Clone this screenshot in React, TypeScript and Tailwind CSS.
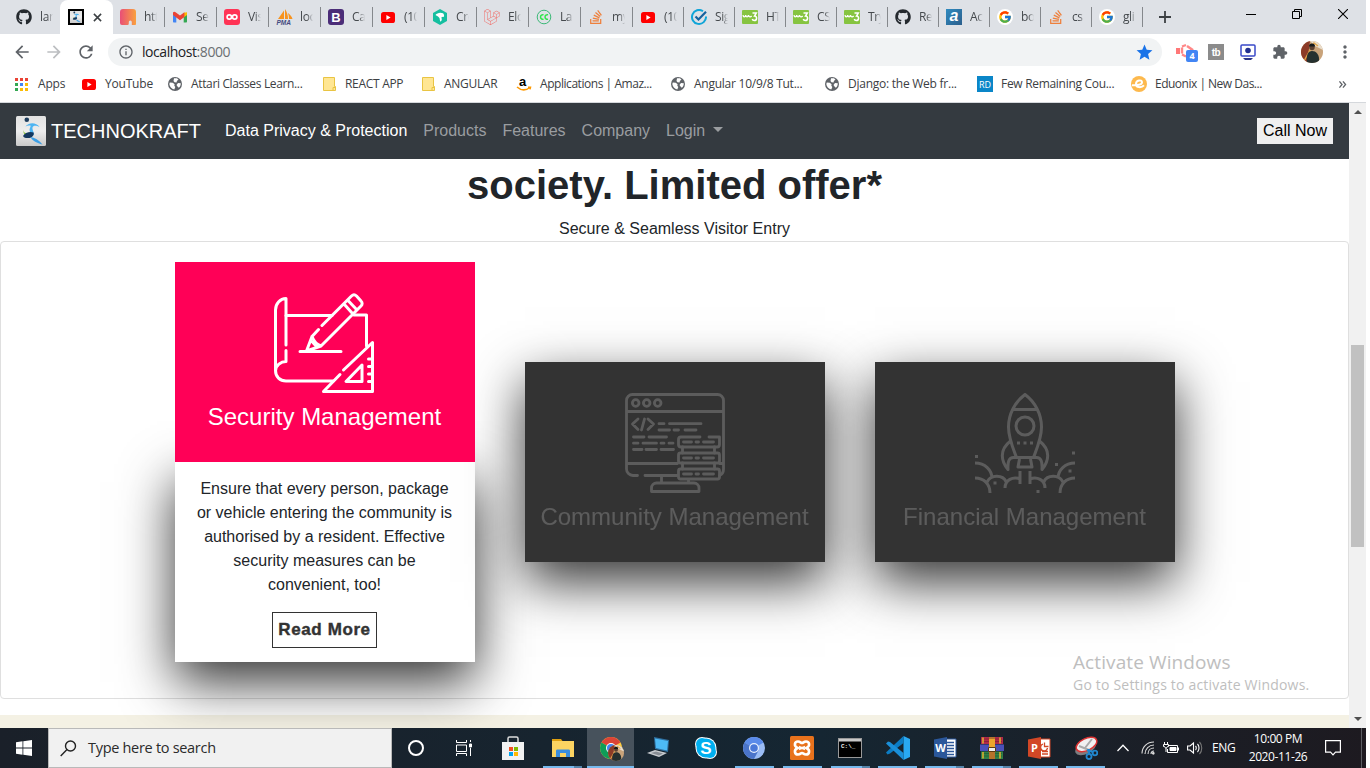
import React from "react";
import type { ReactNode } from "react";
import { FaGithub, FaLaravel, FaStackOverflow } from "react-icons/fa";
import { FcGoogle } from "react-icons/fc";
import {
  MdArrowBack, MdArrowForward, MdRefresh, MdInfoOutline, MdStar, MdExtension, MdMoreVert, MdPublic,
} from "react-icons/md";

/* ---------- favicons ---------- */

const YouTube = () => (
  <svg viewBox="0 0 16 16" className="h-4 w-4">
    <rect x="1" y="3" width="14" height="11" rx="2.6" fill="#f00" />
    <path d="M6.4 6v5l4.2-2.5z" fill="#fff" />
  </svg>
);

const Runner = () => (
  <svg viewBox="0 0 30 30" className="h-full w-full">
    <defs>
      <linearGradient id="plate" x1="0" y1="0" x2="0" y2="1">
        <stop offset="0" stopColor="#e2e2e2" />
        <stop offset="0.5" stopColor="#ededed" />
        <stop offset="1" stopColor="#c9c9c9" />
      </linearGradient>
    </defs>
    <rect width="30" height="30" rx="1.5" fill="url(#plate)" />
    <circle cx="10.800" cy="3.800" r="2.300" fill="#1d3c5c" />
    <path d="M9.500 10.500C12 6.500 20 5.500 23.500 11c-3.500-2-6.500-1.500-7 .5-.5 2.500 2 4.500 1 8-1.500-2-4-3-4-5.500 0-2 1.500-3 1-4.500-1.500-.3-3.500 0-5 1z" fill="#4db4f2" />
    <path d="M7.500 13c-.5 3 1.500 4.500 4.500 4.500l2 2c-4 1.500-7.500-1.500-6.500-6.500z" fill="#8bc63e" />
    <path d="M7 20c2-3.500 7-5 10.500-3.500 1 2-1 5-4 5.500-3 .3-5.500 0-6.500-2z" fill="#14385f" />
    <path d="M14.500 21c4 .5 8.500 3 12 7.500-5.500-1.500-10-3.500-12-7.500z" fill="#3b9fe6" />
  </svg>
);

const RunnerTab = () => (
  <span className="block h-4 w-4 border-2 border-black bg-white"><Runner /></span>
);

const Gmail = () => (
  <svg viewBox="0 0 16 16" className="h-4 w-4">
    <path d="M1 4v8.5c0 .6.4 1 1 1h2.300V6.500z" fill="#4285f4" />
    <path d="M15 4v8.500c0 .6-.4 1-1 1h-2.300V6.500z" fill="#34a853" />
    <path d="M11.700 3.800 15 3.200V6l-3.300 2.500z" fill="#fbbc04" />
    <path d="M1 3.500C1.500 2.500 2.800 2.500 3.600 3.200L8 6.500l4.400-3.300v4.700L8 11.200 3.600 7.900 1 6z" fill="#ea4335" />
  </svg>
);

const Arch = () => (
  <svg viewBox="0 0 16 16" className="h-4 w-4">
    <defs>
      <linearGradient id="arch" x1="0" y1="0" x2="1" y2="0">
        <stop offset="0" stopColor="#e94e77" />
        <stop offset="1" stopColor="#f9a13f" />
      </linearGradient>
    </defs>
    <path d="M3 0h10a3 3 0 0 1 3 3v12c0 .6-.4 1-1 1h-3.200v-3a1.500 1.500 0 0 0-3 0v1.500c0 1-.6 1.500-1.500 1.500H2a2 2 0 0 1-2-2V3a3 3 0 0 1 3-3z" fill="url(#arch)" />
  </svg>
);

const LoopTile = () => (
  <svg viewBox="0 0 16 16" className="h-4 w-4">
    <rect width="16" height="16" rx="3" fill="#ff3355" />
    <circle cx="5.300" cy="8" r="2.200" fill="none" stroke="#fff" strokeWidth="1.700" />
    <circle cx="10.700" cy="8" r="2.200" fill="none" stroke="#fff" strokeWidth="1.700" />
  </svg>
);

const Pma = () => (
  <svg viewBox="0 0 18 16" className="h-4 w-[18px]">
    <path d="M2 10 8 1.500V10zM9 10V0c2 3 3 6 3 10zM13 10c0-2-.3-4-1-6 2 1.500 4 3.500 4.500 6z" fill="#f7931e" />
    <text x="0.500" y="16" fontSize="6.500" fontWeight="bold" fontStyle="italic" fontFamily="Liberation Sans, sans-serif" fill="#444a80">PMA</text>
  </svg>
);

const Tile = ({ className, children }: { className: string; children: ReactNode }) => (
  <span className={`flex h-4 w-4 items-center justify-center leading-none ${className}`}>{children}</span>
);

const BootstrapB = () => (
  <Tile className="rounded-[3px] bg-[#4b2d78] font-['Liberation_Sans',sans-serif] text-[13px] font-bold text-white">B</Tile>
);

const Hexagon = () => (
  <svg viewBox="0 0 16 16" className="h-4 w-4">
    <path d="M8 0l7 4v8l-7 4-7-4V4z" fill="#15bfa0" />
    <path d="M3.500 6C5 4 8 3 11 4.200c1 1 1.300 2.200 1 3.600L9.500 8l.3 3.300-1.600 1.400L7.500 9 6 7.500z" fill="#fff" />
  </svg>
);

const CodeCourse = () => (
  <svg viewBox="0 0 16 16" className="h-4 w-4">
    <circle cx="8" cy="8" r="6.800" fill="none" stroke="#3cb878" strokeWidth="1" />
    <path d="M7.500 5.800a2.300 2.300 0 1 0 0 4.400M12 5.800a2.300 2.300 0 1 0 0 4.400" fill="none" stroke="#2ee54a" strokeWidth="1.500" />
  </svg>
);

const CheckRing = () => (
  <svg viewBox="0 0 16 16" className="h-4 w-4" fill="none">
    <path d="M12 2.200A7 7 0 1 0 15 7.500" stroke="#10a5d8" strokeWidth="2" />
    <path d="M4.500 7.500l3 3L15 2.800" stroke="#17629e" strokeWidth="2.200" />
  </svg>
);

const W3 = () => (
  <svg viewBox="0 0 16 16" className="h-4 w-4">
    <rect y="1" width="16" height="14" rx="1" fill="#86c440" />
    <path d="M1 6.200c.3 2.300 2.200 2.300 2.700 0 .4 2.300 2.300 2.300 2.700 0 .5 2.300 2.300 2 3.300.8" fill="none" stroke="#fff" strokeWidth="1.300" />
    <path d="M10.500 4h3.800L12.500 7c3 .2 2.600 4.500-.2 4.500-1 0-1.800-.5-2-1.500" fill="none" stroke="#fff" strokeWidth="1.500" />
  </svg>
);

const ATile = () => (
  <Tile className="bg-linear-to-br from-[#2f8bc0] to-[#2b5f8c] font-['Liberation_Sans',sans-serif] text-[16px] font-bold italic text-white">
    <span className="-mt-[3px]">a</span>
  </Tile>
);

const GoogleG = () => (
  <span className="flex h-4 w-4 items-center justify-center rounded-full bg-white"><FcGoogle className="h-3.5 w-3.5" /></span>
);

const Stack = () => <FaStackOverflow className="h-4 w-4 text-[#ee7f3b]" />;
const Git = () => <FaGithub className="h-4 w-4 text-[#24292e]" />;

/* ---------- tab strip ---------- */

type Tab = { label: string; icon: ReactNode; w: string };
const wide = "w-[52px]";
const slim = "w-[51px]";
const tabs: Tab[] = [
  { label: "Se", icon: <Gmail />, w: wide },
  { label: "Vis", icon: <LoopTile />, w: wide },
  { label: "loc", icon: <Pma />, w: wide },
  { label: "Ca", icon: <BootstrapB />, w: wide },
  { label: "(10", icon: <YouTube />, w: wide },
  { label: "Cre", icon: <Hexagon />, w: wide },
  { label: "Elo", icon: <FaLaravel className="h-4 w-4 text-[#ef6f6a]" />, w: wide },
  { label: "La", icon: <CodeCourse />, w: wide },
  { label: "my", icon: <Stack />, w: wide },
  { label: "(10", icon: <YouTube />, w: slim },
  { label: "Sig", icon: <CheckRing />, w: slim },
  { label: "HT", icon: <W3 />, w: slim },
  { label: "CS", icon: <W3 />, w: slim },
  { label: "Try", icon: <W3 />, w: slim },
  { label: "Re", icon: <Git />, w: slim },
  { label: "Ac", icon: <ATile />, w: slim },
  { label: "bo", icon: <GoogleG />, w: slim },
  { label: "cs", icon: <Stack />, w: slim },
  { label: "gli", icon: <GoogleG />, w: slim },
];

const TabLabel = ({ children }: { children: string }) => (
  <span className="w-[13px] overflow-hidden whitespace-nowrap text-[12px] leading-4 tracking-[-0.4px] text-[#45494d] [mask-image:linear-gradient(to_right,#000_55%,transparent)]">
    {children}
  </span>
);

const TabStrip = () => (
  <div className="flex h-[34px] bg-[#dee1e6]">
    <div className="flex w-[60px] items-center gap-2 pl-4"><Git /><TabLabel>lar</TabLabel></div>
    <div className="flex w-[53px] items-center gap-2 rounded-t-lg bg-white pl-2">
      <RunnerTab />
      <svg viewBox="0 0 10 10" className="ml-px h-[9px] w-[9px]"><path d="M1 1l8 8M9 1l-8 8" stroke="#3c4043" strokeWidth="1.700" /></svg>
    </div>
    <div className="flex w-[51px] items-center gap-2 pl-[7px]"><Arch /><TabLabel>htt</TabLabel></div>
    {tabs.map((t, i) => (
      <div key={i} className={`flex items-center ${t.w}`}>
        <span className="h-5 w-px bg-[#85888c]" />
        <span className="ml-[7px] flex w-6 items-center">{t.icon}</span>
        <TabLabel>{t.label}</TabLabel>
      </div>
    ))}
    <div className="flex flex-1 items-center">
      <span className="h-5 w-px bg-[#85888c]" />
      <svg viewBox="0 0 12 12" className="ml-4 h-3 w-3"><path d="M6 0v12M0 6h12" stroke="#3c4043" strokeWidth="1.800" /></svg>
    </div>
    <div className="mr-[18px] flex h-7 items-center gap-9">
      <svg viewBox="0 0 10 10" className="h-[10px] w-[10px]"><path d="M0 5.500h10" stroke="#000" /></svg>
      <svg viewBox="0 0 10 10" className="h-[10px] w-[10px]" fill="none" stroke="#000"><path d="M.5 2.500h7v7h-7zM2.500 2.500v-2h7v7h-2" /></svg>
      <svg viewBox="0 0 10 10" className="h-[10px] w-[10px]"><path d="M0 0l10 10M10 0L0 10" stroke="#000" strokeWidth="1.100" /></svg>
    </div>
  </div>
);

/* ---------- toolbar ---------- */

const Avatar = () => (
  <svg viewBox="0 0 22 22" className="h-[22px] w-[22px]">
    <defs><clipPath id="round"><circle cx="11" cy="11" r="11" /></clipPath></defs>
    <g clipPath="url(#round)">
      <rect width="22" height="22" fill="#c9a37a" />
      <path d="M0 0h9l-3 22H0z" fill="#8c3b27" />
      <path d="M9 0h13v9l-8-4z" fill="#eadfce" />
      <path d="M3 20 13 2l4 3" stroke="#e2a64a" strokeWidth="1.500" fill="none" />
      <circle cx="11" cy="6.500" r="2.700" fill="#5b4030" />
      <path d="M8 5.500a3 3 0 0 1 6 0z" fill="#15181a" />
      <path d="M6 22c-1-8 1-12 5-12s8 3 7 12z" fill="#25302f" />
    </g>
  </svg>
);

const Toolbar = () => (
  <div className="flex h-9 items-center bg-white pl-3">
    <MdArrowBack className="h-5 w-5 text-[#5f6368]" />
    <MdArrowForward className="ml-3 h-5 w-5 text-[#bcbec1]" />
    <MdRefresh className="ml-3 h-5 w-5 text-[#5f6368]" />
    <div className="ml-3 flex h-7 w-[1054px] items-center rounded-full bg-[#f1f3f4] pl-2.5 pr-2">
      <MdInfoOutline className="h-4 w-4 text-[#5f6368]" />
      <span className="ml-2 flex-1 pb-0.5 text-[14px] tracking-[-0.45px] text-[#202124]">localhost<span className="text-[#6b6f73]">:8000</span></span>
      <MdStar className="h-[19px] w-[19px] text-[#1a73e8]" />
    </div>
    <div className="relative ml-3.5 h-5 w-6">
      <svg viewBox="0 0 24 20" className="h-5 w-6"><path d="M0 6h4v6H0z" fill="#f77" /><path d="M6 5.500v6M6 4.500l4-1.500M6 12.500l4 2M11 4l5 3.500-2 2" fill="none" stroke="#f88" strokeWidth="2.400" /></svg>
      <span className="absolute left-[10px] top-2 flex h-3 w-3 items-center justify-center rounded-[2px] bg-[#4285f4] text-[9px] font-bold text-white">4</span>
    </div>
    <div className="ml-2 flex h-4 w-4 items-center justify-center bg-[#8b8b8b] font-['Liberation_Sans',sans-serif] text-[10px] font-bold tracking-[-0.5px] text-white">tb</div>
    <svg viewBox="0 0 16 16" className="ml-4 h-4 w-4"><rect x="1" y="1" width="14" height="11" rx="1" fill="#fff" stroke="#3a49c9" strokeWidth="1.500" /><circle cx="8" cy="6.500" r="2.800" fill="#22308f" /><path d="M3 14h10l-2 2H5z" fill="#2b3587" /></svg>
    <MdExtension className="ml-4 h-4 w-4 text-[#5f6368]" />
    <span className="ml-[13px]"><Avatar /></span>
    <MdMoreVert className="ml-3 h-5 w-[20px] text-[#5f6368]" />
  </div>
);

/* ---------- bookmarks ---------- */

const AppsGrid = () => (
  <svg viewBox="0 0 13 13" className="h-[13px] w-[13px]">
    <path d="M0 0h3v3H0zM5 0h3v3H5zM10 0h3v3h-3z" fill="#ea4335" />
    <path d="M0 5h3v3H0zM0 10h3v3H0z" fill="#34a853" /><path d="M5 5h3v3H5z" fill="#4285f4" />
    <path d="M10 5h3v3h-3zM5 10h3v3H5zM10 10h3v3h-3z" fill="#fbbc05" />
  </svg>
);
const Folder = () => (
  <svg viewBox="0 0 13 15" className="h-[15px] w-[13px]">
    <path d="M.5.5h11v9h1v4H.5z" fill="#ffe693" stroke="#e9c443" /><path d="M10 14v-3.500h2.500" fill="none" stroke="#e9c443" />
  </svg>
);
/* Solid disc with light continents */
const Globe = () => (
  <svg viewBox="0 0 16 16" className="h-4 w-4">
    <circle cx="8" cy="8" r="7" fill="#5f6368" />
    <path d="M2.800 6.500l3 .2 1.800 1.500-.3 1.600 1 1.200-1 2.500C4.500 13 2.500 10.500 2.300 8zM7 2.300h3l1.500 1.500-1.500 1-.5 1.700-2-.2L6.500 5zM11 7l2.800.3c0 2-.8 3.500-2 4.500L10.500 10.500l-1-1.500z" fill="#fff" />
  </svg>
);
const Amazon = () => (
  <svg viewBox="0 0 16 16" className="h-4 w-4">
    <text x="3" y="10" fontSize="13" fontWeight="bold" fontFamily="Liberation Sans, sans-serif">a</text>
    <path d="M1 11c4 3.500 9 3.500 13 .5M12 11.200h2.500l-.5 2.200" fill="none" stroke="#f90" strokeWidth="1.500" />
  </svg>
);
const Eduonix = () => (
  <svg viewBox="0 0 16 16" className="h-4 w-4"><circle cx="8" cy="8" r="8" fill="#fdb94d" /><path d="M1 9.200c5 .3 10-.4 10-3 0-3-6-2-6 1.700 0 4 5.500 4 8 1.500" fill="none" stroke="#fff" strokeWidth="2" /></svg>
);

const bookmarks = [
  { w: "w-[66px]", g: "w-[23px]", icon: <AppsGrid />, label: "Apps", t: "tracking-[-0.2px]" },
  { w: "w-[86px]", g: "w-6", icon: <YouTube />, label: "YouTube", t: "tracking-[-0.2px]" },
  { w: "w-[156px]", g: "w-6", icon: <Globe />, label: "Attari Classes Learn...", t: "tracking-[-0.35px]" },
  { w: "w-[99px]", g: "w-[22px]", icon: <Folder />, label: "REACT APP", t: "tracking-[-0.3px]" },
  { w: "w-[94px]", g: "w-[22px]", icon: <Folder />, label: "ANGULAR", t: "tracking-[-0.3px]" },
  { w: "w-[154px]", g: "w-6", icon: <Amazon />, label: "Applications | Amaz...", t: "tracking-[-0.45px]" },
  { w: "w-[154px]", g: "w-6", icon: <Globe />, label: "Angular 10/9/8 Tut...", t: "tracking-[-0.25px]" },
  { w: "w-[153px]", g: "w-6", icon: <Globe />, label: "Django: the Web fr...", t: "tracking-[-0.25px]" },
  { w: "w-[154px]", g: "w-6", icon: <Tile className="bg-[#0a86c8] text-[9px] text-white">RD</Tile>, label: "Few Remaining Cou...", t: "tracking-[-0.3px]" },
  { w: "w-[207px]", g: "w-6", icon: <Eduonix />, label: "Eduonix | New Das...", t: "tracking-[-0.5px]" },
];

const Bookmarks = () => (
  <div className="flex h-[33px] items-center border-b border-[#d5d8dc] bg-white pb-1 pl-[15px]">
    {bookmarks.map((b) => (
      <div key={b.label} className={`flex shrink-0 items-center whitespace-nowrap ${b.w}`}>
        <span className={`flex shrink-0 items-center ${b.g}`}>{b.icon}</span>
        <span className={`text-[12px] leading-4 text-[#3c4043] ${b.t}`}>{b.label}</span>
      </div>
    ))}
    <svg viewBox="0 0 9 8" className="h-[7px] w-[9px]"><path d="M1 .5L4 4 1 7.500M5 .5L8 4 5 7.500" fill="none" stroke="#5f6368" strokeWidth="1.500" /></svg>
  </div>
);

/* ---------- site ---------- */

const SiteNav = () => (
  <nav className="flex h-14 shrink-0 items-center bg-[#343a40] px-4 text-[16px] text-[#9a9da0]">
    <span className="h-[30px] w-[30px]"><Runner /></span>
    <span className="ml-[5px] text-[20px] text-white">TECHNOKRAFT</span>
    <div className="ml-6 flex flex-1 items-center gap-4">
      <span className="text-white">Data Privacy &amp; Protection</span>
      <span>Products</span>
      <span>Features</span>
      <span>Company</span>
      <span className="flex items-center gap-2">Login
        <svg viewBox="0 0 10 5" className="-mt-1 h-[5px] w-[10px]"><path d="M0 0h10L5 5z" fill="currentColor" /></svg>
      </span>
    </div>
    <button className="h-[26px] bg-[#efefef] px-1.5 leading-[26px] text-black">Call Now</button>
  </nav>
);

const Blueprint = () => (
  <svg viewBox="0 0 100 100" className="h-[100px] w-[100px]" fill="none" stroke="#fff" strokeWidth="3" strokeLinecap="round" strokeLinejoin="round">
    <path d="M12 52V5.500C6 5.500 1.500 11 1.500 17v60.500C1.500 84 6 88 12 88h47M12 57.500V68.500C7 68.500 1.500 72.500 1.500 78" />
    <path d="M12 22.500h46M80 22h12.500v31M26 58.500h41" />
    <path d="M44.500 36.500 38 43.500l-5.500 14.500L47 53 87 13c1.500-1.500 1.500-3.500 0-5l-4.500-5c-1.500-1.500-3.500-1.500-5 0L48 32.500M38 43.500c1.500 4 4.500 8 9 9.500M38.500 49l4 4.500M70 11l8.500 9.500M74.500 8l8.500 9" />
    <path d="M69.500 77 98.500 49.500v49H49.500L66 81.500M72 88.500h16V72zM94.500 66h4M94.500 73.500h4M94.500 81h4M94.500 88.500h4" />
  </svg>
);

const ServerMonitor = () => (
  <svg viewBox="0 0 100 100" className="h-[100px] w-[100px]" fill="none" stroke="#fff" strokeWidth="2.800" strokeLinecap="round" strokeLinejoin="round">
    <path d="M12.500 82.500H8a6.500 6.500 0 0 1-6.500-6.500V7.500a6 6 0 0 1 6-6h85a6 6 0 0 1 6 6V76c0 3-1.500 5.500-4 6.500M20 82.500h32M1.500 18.500h97M1.500 70.500h51M94.500 70.500h4" />
    <circle cx="10.700" cy="10" r="3.300" /><circle cx="21.700" cy="10" r="3.300" /><circle cx="32.700" cy="10" r="3.300" />
    <path d="M13 26l-5.500 5 5.500 5.500M19.500 26l-3 11M23 26l5.500 5-5.500 5.500" />
    <path d="M34 30.700h5M44.500 30.700H76M34 37h10.500M49 37h4.500M60 37h11M8.500 44H19M24 44h17.500M8.500 50.200H13M18 50.200h13.500M36 50.200h3M44 50.200h4M8.500 56.500H17M21 56.500h10.500M36 56.500h12.500" />
    <path d="M75 44H56a2.500 2.500 0 0 0-2.500 2.500v5A2.500 2.500 0 0 0 56 54h36a2.500 2.500 0 0 0 2.500-2.500V44H84" />
    <rect x="53.500" y="60" width="41" height="10" rx="2" /><rect x="53.500" y="76" width="41" height="10" rx="2" />
    <path d="M57.500 54v6M89.500 54v6M57.500 70v6M89.500 70v6M58.500 49h8M71 49h2.500M78.500 49h10M58.500 65h8M71 65h2.500M78.500 65h10M58.500 81h8M71 81h2.500M78.500 81h10" />
    <path d="M36.500 83v7M63.500 87v3M26.500 98.500h47.500V95a5 5 0 0 0-5-5H31.500a5 5 0 0 0-5 5z" />
  </svg>
);

const Rocket = () => (
  <svg viewBox="0 0 100 100" className="h-[100px] w-[100px]" fill="none" stroke="#fff" strokeWidth="3" strokeLinejoin="round">
    <path d="M50 1.500C40 9 33.500 21 33.500 34c0 11 4 20 8 30.500h17c4-10.500 8-19.500 8-30.500C66.500 21 60 9 50 1.500zM37.500 16.500h25" />
    <circle cx="50" cy="33" r="9" />
    <path d="M42 50h3M48.500 50h3M55 50h3" />
    <path d="M35.500 48C24 57 26 68 33 76.500c-.5-8 1-12 5.500-12h23c4.500 0 6 4 5.500 12C74 68 76 57 64.500 48M44.500 66l-1.500 8h14l-1.500-8" />
    <path d="M45 78v13M55 78v13M0 70c10 0 17 7 17 15.500M0 85c9 0 15 6 15 15M12 89c4-8 16-7 19-.5M30 95c0-8 8-12 15-9M100 70c-10 0-17 7-17 15.500M100 85c-9 0-15 6-15 15M88 89c-4-8-16-7-19-.5M70 95c0-8-8-12-15-9" />
    <path d="M0 63.500h3M18.500 90h3M97 60h3M80 71.500h3M93.500 78h3M61.500 98.500h3" />
  </svg>
);

const Service = ({ title, icon, active, children }: { title: string; icon: ReactNode; active?: boolean; children?: ReactNode }) => (
  <div className={`w-[300px] ${active ? "" : "mt-[100px] h-[200px] shadow-[0_20px_50px_rgba(0,0,0,0.8)]"}`}>
    <div className={`relative z-10 flex h-[200px] flex-col items-center pt-[31px] ${active ? "bg-[#ff0057]" : "bg-[#333]"}`}>
      <div className={`flex flex-col items-center ${active ? "" : "opacity-20"}`}>
        {icon}
        <h3 className="mt-[9px] whitespace-nowrap text-[24px] leading-[29px] text-white">{title}</h3>
      </div>
    </div>
    {children}
  </div>
);

const Site = () => (
  <main className="flex h-[625px] w-[1349px] flex-col overflow-hidden bg-white font-['Liberation_Sans',Arial,sans-serif] text-[16px] text-[#212529]">
    <SiteNav />
    <h1 className="mt-0.5 shrink-0 text-center text-[40px] font-bold leading-[48px]">society. Limited offer*</h1>
    <p className="mt-2 shrink-0 text-center leading-6">Secure &amp; Seamless Visitor Entry</p>
    <section className="relative z-10 flex h-[458px] shrink-0 items-start justify-center gap-[50px] rounded border border-[#dfdfdf] pt-5">
      <Service title="Security Management" icon={<Blueprint />} active>
        <div className="flex h-[200px] flex-col items-center bg-white px-5 pt-[15px] shadow-[0_20px_50px_rgba(0,0,0,0.8)]">
          <p className="text-center leading-6">Ensure that every person, package or vehicle entering the community is authorised by a resident. Effective security measures can be convenient, too!</p>
          <a className="mt-[15px] flex h-9 w-[105px] items-center justify-center whitespace-nowrap border border-[#333] text-[17px] font-bold tracking-[0.6px] text-[#333] [-webkit-text-stroke:0.4px_#333]">Read More</a>
        </div>
      </Service>
      <Service title="Community Management" icon={<ServerMonitor />} />
      <Service title="Financial Management" icon={<Rocket />} />
    </section>
    <div className="mt-4 h-10 shrink-0 bg-[#f4f1e4]" />
  </main>
);

const ScrollBar = () => (
  <div className="flex h-[625px] w-[17px] flex-col items-center bg-[#f1f1f1]">
    <svg viewBox="0 0 8 4" className="mt-[7px] h-1 w-2"><path d="M4 0l4 4H0z" fill="#505050" /></svg>
    <div className="mt-[231px] h-[202px] w-[13px] bg-[#c1c1c1]" />
    <svg viewBox="0 0 8 4" className="mb-[7px] mt-auto h-1 w-2"><path d="M4 4l4-4H0z" fill="#505050" /></svg>
  </div>
);

/* ---------- taskbar ---------- */

const Store = () => (
  <svg viewBox="0 0 24 24" className="h-6 w-6"><path d="M7 6V2.500C7 1.500 7.500 1 8.500 1h7c1 0 1.500.5 1.500 1.500V6" fill="none" stroke="#ddd" strokeWidth="1.500" /><path d="M1 6h22v18H1z" fill="#f2f2f2" /><path d="M8 11h4v4H8z" fill="#f25022" /><path d="M13 11h4v4h-4z" fill="#7fba00" /><path d="M8 16h4v4H8z" fill="#00a4ef" /><path d="M13 16h4v4h-4z" fill="#ffb900" /></svg>
);
const Explorer = () => (
  <svg viewBox="0 0 24 24" className="h-6 w-6"><path d="M1 3h9l1.500 2H1z" fill="#e0a010" /><path d="M1 5h22v16H1z" fill="#fcd462" /><path d="M5 21v-6c0-1 .5-1.500 1.500-1.500h11c1 0 1.500.5 1.500 1.500v6h-4v-4H9v4z" fill="#3b8ede" /></svg>
);
const Chrome = () => (
  <span className="relative block h-6 w-6">
    <svg viewBox="0 0 24 24" className="h-6 w-6">
      <circle cx="12" cy="12" r="11" fill="#ffcd40" />
      <path d="M12 12 2.500 6.500a11 11 0 0 1 19 0z" fill="#db4437" />
      <path d="M12 12 2.500 6.500A11 11 0 0 0 12 23l4.500-8.500z" fill="#0f9d58" />
      <circle cx="12" cy="12" r="5" fill="#fff" /><circle cx="12" cy="12" r="4" fill="#4285f4" />
    </svg>
    <span className="absolute left-[9px] top-[9px] block origin-top-left scale-[0.73]"><Avatar /></span>
  </span>
);
const Laptop = () => (
  <svg viewBox="0 0 24 24" className="h-6 w-6"><path d="M8 1l15 3-1 12-13-3z" fill="#2f6f9f" /><path d="M9 2.500l13 2.500-1 9.500-11-2.500z" fill="#4dbaf5" /><path d="M1 17l8-3 12 3-8 4z" fill="#c8ccd0" /><path d="M5 17l5-1.500 7 2-4 2z" fill="#878d94" /></svg>
);
const Skype = () => (
  <svg viewBox="0 0 24 24" className="h-6 w-6"><circle cx="8" cy="8" r="7" fill="#fff" /><circle cx="16" cy="16" r="7" fill="#fff" /><circle cx="12" cy="12" r="10.500" fill="#fff" /><circle cx="8" cy="8" r="6" fill="#00aff0" /><circle cx="16" cy="16" r="6" fill="#00aff0" /><circle cx="12" cy="12" r="9.500" fill="#00aff0" /><text x="12" y="18" textAnchor="middle" fontSize="17" fontWeight="bold" fill="#fff" fontFamily="Liberation Sans, sans-serif">S</text></svg>
);
const Chromium = () => (
  <svg viewBox="0 0 24 24" className="h-6 w-6"><circle cx="12" cy="12" r="11" fill="#9bbdf5" /><path d="M12 12 2.500 6.500a11 11 0 0 1 19 0z" fill="#5a8bea" /><path d="M12 12 2.500 6.500A11 11 0 0 0 12 23l4.500-8.500z" fill="#4a74c9" /><circle cx="12" cy="12" r="5" fill="#e9f0fd" /><circle cx="12" cy="12" r="3.800" fill="#4a78d8" /></svg>
);
const Xampp = () => (
  <svg viewBox="0 0 24 24" className="h-6 w-6"><rect width="24" height="24" rx="1.500" fill="#e8721c" /><path d="M7.500 12C3.500 10 4.500 5.500 8 5.500c2.500 0 2.500 1.500 4 1.500s1.500-1.500 4-1.500c3.500 0 4.500 4.500.5 6.500 4 2 3 6.500-.5 6.500-2.500 0-2.500-1.500-4-1.500s-1.500 1.500-4 1.500c-3.500 0-4.500-4.500-.5-6.500z" fill="none" stroke="#fff" strokeWidth="2.600" /><path d="M9 10.500c2 1.500 4 1.500 6 0M9 13.500c2-1.500 4-1.500 6 0" fill="none" stroke="#fff" strokeWidth="1.800" /></svg>
);
const Cmd = () => (
  <svg viewBox="0 0 24 24" className="h-6 w-6"><rect x=".5" y="2.500" width="23" height="19" fill="#000" stroke="#999" /><path d="M1 3h22v2.500H1z" fill="#c9c9c9" /><text x="3" y="11.500" fontSize="6" fontWeight="bold" fill="#eee" fontFamily="Liberation Mono, monospace">C:\_</text></svg>
);
const Code = () => (
  <svg viewBox="0 0 24 24" className="h-6 w-6"><path d="M17.500 0 24 3v18l-6.500 3z" fill="#29a9f2" /><path d="M17.500 0v7L4 17.500 1.500 18.500 0 16.500z" fill="#0b7cc4" /><path d="M0 7.500l2-2L4 6l13.500 11v7z" fill="#1a8fd8" /></svg>
);
const Office = ({ color, letter }: { color: string; letter: string }) => (
  <svg viewBox="0 0 24 24" className="h-6 w-6"><path d="M12 3h11v18H12z" fill="#fff" stroke={color} />{letter === "W" ? <path d="M14 6.500h7M14 9.500h7M14 12.500h7M14 15.500h7M14 18.500h7" stroke={color} strokeWidth="1.300" /> : <path d="M15 15.500h6M15 18h6M17.500 6.500v4h4M16 8a3.500 3.500 0 1 0 4.500 4" stroke={color} strokeWidth="1.300" fill="none" />}<path d="M1 3.500 14 1v22L1 20.500z" fill={color} /><text x="7.500" y="16" textAnchor="middle" fontSize="11" fontWeight="bold" fill="#fff" fontFamily="Open Sans, sans-serif">{letter}</text></svg>
);
const WinRar = () => (
  <svg viewBox="0 0 24 24" className="h-6 w-6"><path d="M1 1h22v7H1z" fill="#b02a48" /><path d="M0 8.500h24V15H0z" fill="#4a50b8" /><path d="M1 15.500h22V23H1z" fill="#2f7f46" /><path d="M2 3h20M2 5.500h20M2 17.500h20M2 20h20" stroke="#0003" /><path d="M3 1.500v6M20 1.500v6M3 16v6.500M20 16v6.500" stroke="#e6b430" strokeWidth="1.500" /><path d="M9 1h6v22H9z" fill="#b5722c" /><path d="M9 3h6v11H9z" fill="#eda62d" /><path d="M8.500 11.500h7v4h-7z" fill="#eee" stroke="#5b3b12" /></svg>
);
const Snip = () => (
  <svg viewBox="0 0 24 24" className="h-6 w-6"><ellipse cx="11.500" cy="12" rx="11" ry="6" transform="rotate(-25 11.500 12)" fill="#7d7d80" /><ellipse cx="12.500" cy="8.500" rx="11" ry="6" transform="rotate(-25 12.500 8.500)" fill="#f1f1f1" stroke="#d33" strokeWidth="1.500" /><path d="M5 10l10 4M11 12l7-9" stroke="#aaa" strokeWidth="2" /><circle cx="15" cy="20.500" r="2.500" fill="none" stroke="#2187cf" strokeWidth="1.800" /><circle cx="21" cy="17" r="2.300" fill="none" stroke="#2187cf" strokeWidth="1.800" /><path d="M13 14l6 2M15 13v6" stroke="#2187cf" strokeWidth="2" /></svg>
);
const TaskView = () => (
  <svg viewBox="0 0 16 16" className="h-4 w-4" fill="none" stroke="#fff"><path d="M.5 0v2.500h10V0M.5 5h10v6.500H.5zM.5 16v-2.500h10V16M14.500 0v2M14.500 8v8" /><path d="M13.500 4h2v3h-2z" fill="#fff" /></svg>
);

const apps: { w: string; icon: ReactNode; open?: boolean; more?: boolean; focus?: boolean }[] = [
  { w: "w-12", icon: <span className="h-4 w-4 rounded-full border-2 border-white" /> },
  { w: "w-[47px]", icon: <TaskView /> },
  { w: "w-[51px]", icon: <Store /> },
  { w: "w-[49px]", icon: <Explorer />, open: true, more: true },
  { w: "w-[47px]", icon: <Chrome />, open: true, focus: true },
  { w: "w-[48px]", icon: <Laptop /> },
  { w: "w-[48px]", icon: <Skype /> },
  { w: "w-[48px]", icon: <Chromium />, open: true },
  { w: "w-[48px]", icon: <Xampp />, open: true },
  { w: "w-[48px]", icon: <Cmd />, open: true, more: true },
  { w: "w-[47px]", icon: <Code />, open: true },
  { w: "w-[47px]", icon: <Office color="#2b579a" letter="W" />, open: true, more: true },
  { w: "w-[47px]", icon: <WinRar />, open: true, more: true },
  { w: "w-[47px]", icon: <Office color="#d24726" letter="P" />, open: true },
  { w: "w-[47px]", icon: <Snip />, open: true },
];

const Taskbar = () => (
  <footer className="flex h-10 bg-linear-to-r from-[#1a2029] via-[#152632] via-60% to-[#1d1a20] text-white">
    <div className="flex w-12 items-center justify-center">
      <svg viewBox="0 0 16 16" className="h-4 w-4" fill="#fff"><path d="M0 2.200 6.500 1.300v6.200H0zM7.300 1.200 16 0v7.500H7.300zM0 8.400h6.500v6.300L0 13.800zM7.300 8.400H16V16l-8.700-1.200z" /></svg>
    </div>
    <div className="flex w-[344px] items-center border border-[#b9b9b9] bg-[#f1f1f1] pl-[11px]">
      <svg viewBox="0 0 17 17" className="h-[17px] w-[17px]" fill="none" stroke="#222" strokeWidth="1.400"><circle cx="10.500" cy="6" r="5" /><path d="M7 9.500.7 16" /></svg>
      <span className="ml-[11px] text-[14.500px] tracking-[-0.3px] text-[#2b2b2b]">Type here to search</span>
    </div>
    {apps.map((a, i) => (
      <div key={i} className={`flex shrink-0 flex-col items-center ${a.w} ${a.focus ? "bg-[#47525c]" : ""}`}>
        <div className="flex h-[38px] items-center pt-0.5">{a.icon}</div>
        {a.open && (
          <div className={`flex h-0.5 ${a.focus ? "w-full" : "w-[39px]"}`}>
            <span className="flex-1 bg-[#76b9ed]" />
            {a.more && <span className="w-2 bg-[#5584aa]" />}
          </div>
        )}
      </div>
    ))}
    <div className="ml-2 flex items-center">
      <svg viewBox="0 0 12 8" className="h-2 w-3" fill="none" stroke="#fff" strokeWidth="1.300"><path d="M.5 7 6 1.300 11.500 7" /></svg>
      <svg viewBox="0 0 14 14" className="ml-3 h-[14px] w-[14px]" fill="none" stroke="#ddd" strokeWidth="1.100"><path d="M1 12.500C1 6 6 1 13 1M4 13c0-5 4-9 9-9M7 13c0-3.500 2.500-6 6-6M10 13c0-2 1-3 3-3" /><circle cx="12.300" cy="12.300" r=".8" fill="#fff" /></svg>
      <svg viewBox="0 0 16 12" className="ml-2 h-3 w-4" fill="none" stroke="#fff"><path d="M6 3.500h8.500v7H4.500V7M15.500 5.500v3M1.500 0v2M4.500 0v2M.5 2.500h5v2h-1l-1 1.500h-1l-1-1.500h-1zM3 6v4" /><path d="M7 5.500h6v3H7z" fill="#fff" /></svg>
      <svg viewBox="0 0 16 14" className="ml-2 h-[14px] w-4" fill="none" stroke="#fff" strokeWidth="1.100"><path d="M.6 5v4H3l3.500 3V2L3 5zM8.500 5c1 1 1 3 0 4M10.500 3c2 2 2 6 0 8" /><path d="M12.500 1c3 3 3 9 0 12" stroke="#777" /></svg>
      <span className="ml-[9px] w-6 text-[12px] tracking-[-0.3px]">ENG</span>
      <div className="ml-3 flex w-[60px] flex-col items-center whitespace-nowrap text-[12px] leading-[18px] tracking-[-0.4px]">
        <span>10:00 PM</span><span>2020-11-26</span>
      </div>
      <svg viewBox="0 0 16 16" className="ml-[17px] h-4 w-4" fill="none" stroke="#fff" strokeWidth="1.200"><path d="M.6.6h14.800v11.500H10.500L8 14.800l-2.500-2.700H.6z" /></svg>
    </div>
    <span className="ml-auto mr-1 h-10 w-px bg-[#5b5d62]" />
  </footer>
);

export default function App() {
  return (
    <div className="h-[768px] w-[1370px] overflow-hidden bg-white">
      <div className="relative flex h-[768px] w-[1366px] flex-col font-['Open_Sans','Noto_Sans',sans-serif]">
        <TabStrip />
        <Toolbar />
        <Bookmarks />
        <div className="flex"><Site /><ScrollBar /></div>
        <div className="absolute left-[1073px] top-[650px] z-20 whitespace-nowrap text-[#bebebe]">
          <div className="text-[19px] leading-6 tracking-[0.1px]">Activate Windows</div>
          <div className="text-[14px] leading-[22px] tracking-[0.2px]">Go to Settings to activate Windows.</div>
        </div>
        <Taskbar />
      </div>
    </div>
  );
}
